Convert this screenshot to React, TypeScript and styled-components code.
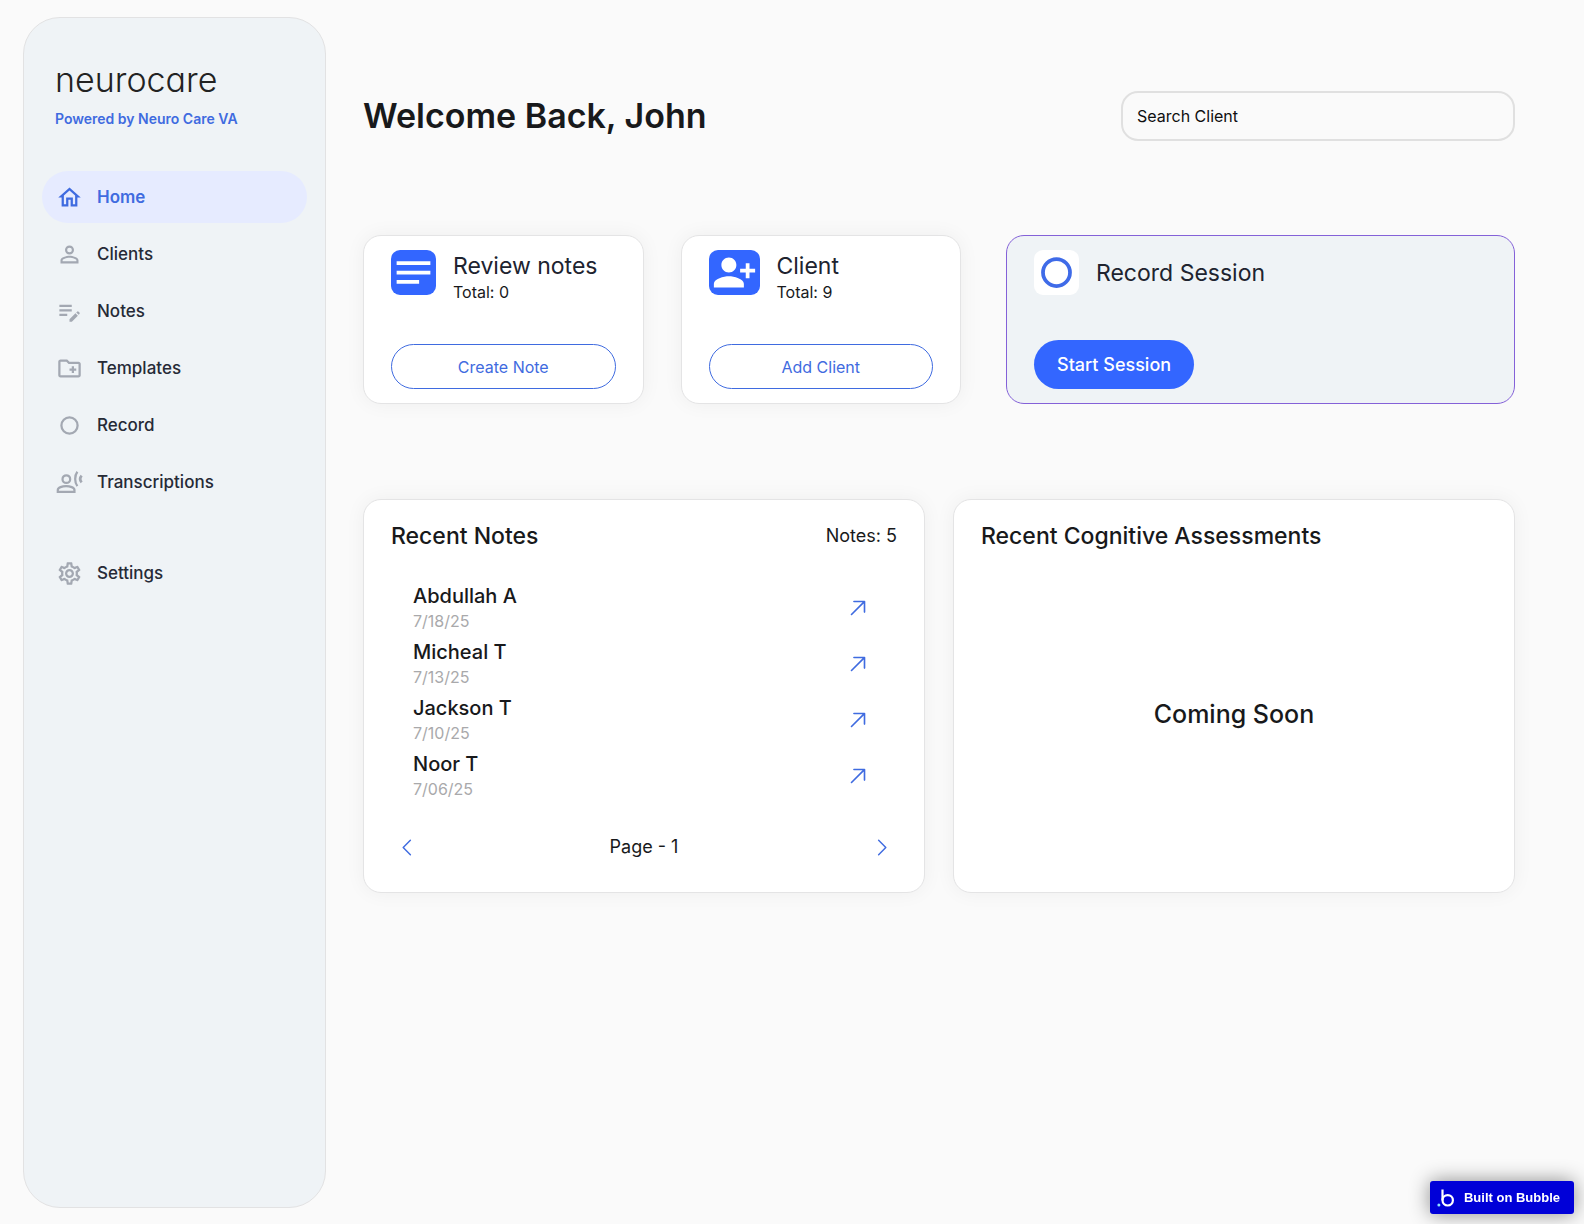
import React from "react";
import styled, { createGlobalStyle } from "styled-components";
import {
  MdEditNote,
  MdNotes,
  MdOutlineCreateNewFolder,
  MdOutlineHome,
  MdOutlineSettings,
  MdPersonAddAlt1,
  MdPersonOutline,
} from "react-icons/md";
import { PiArrowUpRight, PiCaretLeft, PiCaretRight } from "react-icons/pi";

const GlobalStyle = createGlobalStyle`
  *, *::before, *::after { box-sizing: border-box; }
  body {
    margin: 0;
    background: #fafafa;
    color: #18191b;
    font-family: Inter, "Liberation Sans", sans-serif;
  }
  h1, h2, p, ul { margin: 0; padding: 0; }
  ul { list-style: none; }
  button, input { font: inherit; }
  button { cursor: pointer; }
`;

const Page = styled.div`
  display: flex;
  align-items: stretch;
  gap: 37px;
  min-height: 100vh;
  padding: 17px 69px 16px 23px;
`;

const Sidebar = styled.aside`
  flex: 0 0 303px;
  padding: 40px 18px;
  border: 1px solid #e2e2e3;
  border-radius: 37px;
  background: #eff3f6;
`;

const Brand = styled.div`
  padding: 0 13px;
`;

const Wordmark = styled.div`
  color: #222;
  font-size: 34px;
  font-weight: 300;
  font-feature-settings: "cv11";
  line-height: 44px;
`;

const Tagline = styled.p`
  margin-top: 7px;
  color: #3f6be0;
  font-size: 14px;
  font-weight: 600;
  line-height: 20px;
`;

const NavList = styled.ul`
  display: flex;
  flex-direction: column;
  gap: 5px;
  margin-top: 42px;
`;

const NavItem = styled.li<{ $apart?: boolean }>`
  margin-top: ${(p) => (p.$apart ? "34px" : "0")};
`;

const NavLink = styled.a<{ $active?: boolean }>`
  display: flex;
  align-items: center;
  gap: 14px;
  height: 52px;
  padding: 0 14px;
  border-radius: 26px;
  background: ${(p) => (p.$active ? "#e6ebff" : "transparent")};
  color: ${(p) => (p.$active ? "#3f6be0" : "#262a36")};
  font-size: 17px;
  font-weight: ${(p) => (p.$active ? 600 : 500)};
  line-height: 24px;
  text-decoration: none;

  svg {
    flex: none;
    color: ${(p) => (p.$active ? "#3f6be0" : "#a3a8b2")};
  }
`;

const Main = styled.main`
  flex: 1;
  min-width: 0;
  padding-top: 74px;
`;

const Header = styled.header`
  display: flex;
  align-items: center;
  justify-content: space-between;
  gap: 24px;
`;

const Title = styled.h1`
  font-size: 34px;
  font-weight: 600;
  line-height: 44px;
`;

const SearchInput = styled.input`
  width: 394px;
  height: 50px;
  padding: 0 14px;
  border: 2px solid #e0e0e0;
  border-radius: 17px;
  background: transparent;
  color: #0f0f10;
  font-size: 16px;

  &::placeholder {
    color: #0f0f10;
    opacity: 1;
  }
`;

const Actions = styled.section`
  display: grid;
  grid-template-columns: minmax(0, 598fr) minmax(0, 509fr);
  gap: 45px;
  margin-top: 94px;
`;

const CardPair = styled.div`
  display: grid;
  grid-template-columns: 1fr 1fr;
  gap: 37px;
`;

const Card = styled.article<{ $accent?: boolean }>`
  display: flex;
  flex-direction: column;
  align-items: ${(p) => (p.$accent ? "flex-start" : "stretch")};
  justify-content: space-between;
  min-height: 169px;
  padding: 14px 27px;
  border: 1px solid ${(p) => (p.$accent ? "#8461d8" : "#e4e4e5")};
  border-radius: 18px;
  background: ${(p) => (p.$accent ? "#eff3f6" : "#fff")};
  box-shadow: ${(p) => (p.$accent ? "none" : "0 0 20px rgba(0, 0, 0, 0.05)")};
`;

const CardHead = styled.div<{ $center?: boolean }>`
  display: flex;
  align-items: ${(p) => (p.$center ? "center" : "flex-start")};
  gap: 17px;
`;

const IconTile = styled.span<{ $wide?: boolean; $light?: boolean }>`
  display: flex;
  flex: none;
  align-items: center;
  justify-content: center;
  width: ${(p) => (p.$wide ? "51px" : "45px")};
  height: 45px;
  border-radius: 9px;
  background: ${(p) => (p.$light ? "#fff" : "#3366ff")};
  color: ${(p) => (p.$light ? "#3f6be8" : "#fff")};
`;

const CardTitle = styled.h2`
  color: #20232f;
  font-size: 23px;
  font-weight: 400;
  line-height: 32px;
`;

const CardMeta = styled.p`
  font-size: 16px;
  line-height: 20px;
`;

const OutlineButton = styled.button`
  height: 45px;
  border: 1px solid #3f6be0;
  border-radius: 23px;
  background: #fff;
  color: #3f6be0;
  font-size: 16px;
`;

const SolidButton = styled.button`
  height: 49px;
  padding: 0 23px;
  border: 0;
  border-radius: 25px;
  background: #3366ff;
  color: #fff;
  font-size: 18px;
  font-weight: 500;
`;

const Panels = styled.section`
  display: grid;
  grid-template-columns: repeat(2, minmax(0, 1fr));
  gap: 28px;
  margin-top: 95px;
`;

const Panel = styled.article`
  display: flex;
  flex-direction: column;
  min-height: 394px;
  padding: 20px 27px 16px;
  border: 1px solid #e4e4e5;
  border-radius: 18px;
  background: #fff;
  box-shadow: 0 0 20px rgba(0, 0, 0, 0.05);
`;

const PanelHead = styled.div`
  display: flex;
  align-items: center;
  justify-content: space-between;
`;

const PanelTitle = styled.h2`
  font-size: 23px;
  font-weight: 500;
  line-height: 32px;
`;

const Count = styled.p`
  font-size: 18px;
  line-height: 32px;
`;

const NoteList = styled.ul`
  display: flex;
  flex-direction: column;
  gap: 6px;
  margin-top: 31px;
  padding: 0 23px 0 22px;
`;

const NoteRow = styled.li`
  display: flex;
  align-items: center;
  justify-content: space-between;
`;

const NoteName = styled.p`
  font-size: 20px;
  font-weight: 500;
  line-height: 26px;
`;

const NoteDate = styled.p`
  color: #a9a9ab;
  font-size: 16px;
  line-height: 24px;
`;

const IconButton = styled.button`
  display: flex;
  align-items: center;
  justify-content: center;
  width: 32px;
  height: 32px;
  padding: 0;
  border: 0;
  background: transparent;
  color: #3f6be0;
`;

const Pager = styled.nav`
  display: flex;
  align-items: center;
  justify-content: space-between;
  margin-top: auto;
  padding-bottom: 13px;
`;

const PageLabel = styled.span`
  font-size: 18px;
  line-height: 32px;
`;

const ComingSoon = styled.p`
  display: flex;
  flex: 1;
  align-items: center;
  justify-content: center;
  font-size: 25px;
  font-weight: 500;
  line-height: 32px;
`;

const BubbleBadge = styled.a`
  position: fixed;
  right: 10px;
  bottom: 10px;
  display: flex;
  align-items: center;
  gap: 9px;
  height: 33px;
  padding: 0 14px 0 7px;
  border-radius: 3px;
  background: #0000d8;
  box-shadow: 0 0 20px rgba(0, 0, 0, 0.45);
  color: #fff;
  font-family: "Liberation Sans", Arial, sans-serif;
  font-size: 13px;
  font-weight: 700;
  text-decoration: none;
`;

const RingIcon = ({ size, stroke }: { size: number; stroke: number }) => (
  <svg width={size} height={size} viewBox="0 0 24 24" fill="none" aria-hidden="true">
    <circle cx="12" cy="12" r="7.2" stroke="currentColor" strokeWidth={stroke} />
  </svg>
);

const VoiceIcon = ({ size }: { size: number }) => (
  <svg width={size} height={size} viewBox="0 0 24 24" fill="none" aria-hidden="true">
    <g stroke="currentColor" strokeWidth="2">
      <circle cx="9.2" cy="9" r="3.4" />
      <path d="M1.6 20.4V18.6C1.6 16.4 5.6 15.2 9 15.2S16.4 16.4 16.4 18.6V20.4Z" />
      <path d="M19 2.4C16.4 5.8 16.4 11.8 19 15.2" />
      <path d="M22.8 5.8C21.2 7.6 21.2 10 22.8 11.8" strokeWidth="2.4" />
    </g>
  </svg>
);

const BubbleMark = () => (
  <svg width="18" height="20" viewBox="0 0 18 20" fill="none" aria-hidden="true">
    <circle cx="10.7" cy="12.3" r="5.2" stroke="#fff" strokeWidth="2.2" />
    <path d="M5.5 1.5V12.3" stroke="#fff" strokeWidth="2.2" />
    <circle cx="1.9" cy="17" r="1.5" fill="#8fe3ff" />
  </svg>
);

const NAV = [
  { label: "Home", icon: <MdOutlineHome size={27} />, active: true },
  { label: "Clients", icon: <MdPersonOutline size={27} /> },
  { label: "Notes", icon: <MdEditNote size={27} /> },
  { label: "Templates", icon: <MdOutlineCreateNewFolder size={27} /> },
  { label: "Record", icon: <RingIcon size={27} stroke={2} /> },
  { label: "Transcriptions", icon: <VoiceIcon size={27} /> },
  { label: "Settings", icon: <MdOutlineSettings size={27} />, apart: true },
];

const NOTES = [
  { name: "Abdullah A", date: "7/18/25" },
  { name: "Micheal T", date: "7/13/25" },
  { name: "Jackson T", date: "7/10/25" },
  { name: "Noor T", date: "7/06/25" },
];

export default function App() {
  return (
    <>
      <GlobalStyle />
      <Page>
        <Sidebar>
          <Brand>
            <Wordmark>neurocare</Wordmark>
            <Tagline>Powered by Neuro Care VA</Tagline>
          </Brand>
          <nav aria-label="Main">
            <NavList>
              {NAV.map((item) => (
                <NavItem key={item.label} $apart={item.apart}>
                  <NavLink href="#" $active={item.active}>
                    {item.icon}
                    {item.label}
                  </NavLink>
                </NavItem>
              ))}
            </NavList>
          </nav>
        </Sidebar>

        <Main>
          <Header>
            <Title>Welcome Back, John</Title>
            <SearchInput type="text" placeholder="Search Client" aria-label="Search Client" />
          </Header>

          <Actions>
            <CardPair>
              <Card>
                <CardHead>
                  <IconTile>
                    <MdNotes size={45} />
                  </IconTile>
                  <div>
                    <CardTitle>Review notes</CardTitle>
                    <CardMeta>Total: 0</CardMeta>
                  </div>
                </CardHead>
                <OutlineButton type="button">Create Note</OutlineButton>
              </Card>
              <Card>
                <CardHead>
                  <IconTile $wide>
                    <MdPersonAddAlt1 size={45} />
                  </IconTile>
                  <div>
                    <CardTitle>Client</CardTitle>
                    <CardMeta>Total: 9</CardMeta>
                  </div>
                </CardHead>
                <OutlineButton type="button">Add Client</OutlineButton>
              </Card>
            </CardPair>
            <Card $accent>
              <CardHead $center>
                <IconTile $light>
                  <RingIcon size={45} stroke={2} />
                </IconTile>
                <CardTitle>Record Session</CardTitle>
              </CardHead>
              <SolidButton type="button">Start Session</SolidButton>
            </Card>
          </Actions>

          <Panels>
            <Panel>
              <PanelHead>
                <PanelTitle>Recent Notes</PanelTitle>
                <Count>Notes: 5</Count>
              </PanelHead>
              <NoteList>
                {NOTES.map((note) => (
                  <NoteRow key={note.name}>
                    <div>
                      <NoteName>{note.name}</NoteName>
                      <NoteDate>{note.date}</NoteDate>
                    </div>
                    <IconButton type="button" aria-label={`Open note for ${note.name}`}>
                      <PiArrowUpRight size={26} />
                    </IconButton>
                  </NoteRow>
                ))}
              </NoteList>
              <Pager aria-label="Notes pages">
                <IconButton type="button" aria-label="Previous page">
                  <PiCaretLeft size={23} />
                </IconButton>
                <PageLabel>Page - 1</PageLabel>
                <IconButton type="button" aria-label="Next page">
                  <PiCaretRight size={23} />
                </IconButton>
              </Pager>
            </Panel>
            <Panel>
              <PanelTitle>Recent Cognitive Assessments</PanelTitle>
              <ComingSoon>Coming Soon</ComingSoon>
            </Panel>
          </Panels>
        </Main>
      </Page>
      <BubbleBadge href="#">
        <BubbleMark />
        Built on Bubble
      </BubbleBadge>
    </>
  );
}
